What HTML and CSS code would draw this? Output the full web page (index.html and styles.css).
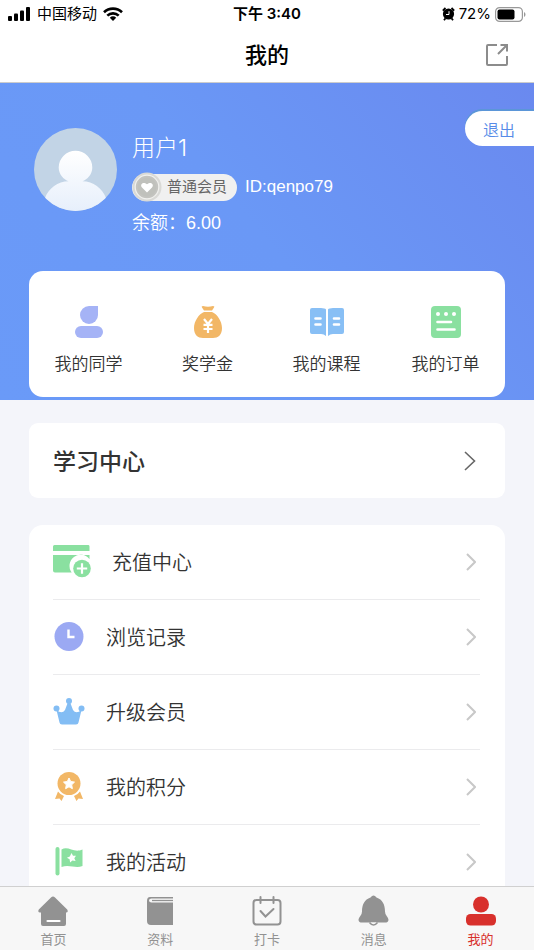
FILE: index.html
```html
<!DOCTYPE html>
<html lang="zh-CN">
<head>
<meta charset="utf-8">
<meta name="viewport" content="width=device-width, initial-scale=1">
<title>我的</title>
<link rel="stylesheet" href="styles.css">
</head>
<body>
<div class="status">
  <div class="status-side">
    <svg width="23" height="14" viewBox="0 0 23 14"><rect x="0" y="9" width="4" height="5" rx="1"/><rect x="6" y="6.500" width="4" height="7.500" rx="1"/><rect x="12" y="3.500" width="4" height="10.500" rx="1"/><rect x="18" y="0" width="4" height="14" rx="1"/></svg>
    <span>中国移动</span>
    <svg width="20" height="14" viewBox="0 0 20 14" fill="none" stroke="#000" stroke-width="2.600"><path d="M1 5.200a13 13 0 0 1 18 0"/><path d="M4.300 8.600a8.300 8.300 0 0 1 11.400 0"/><path d="M10 14l-3.200-3.200a4.700 4.700 0 0 1 6.400 0z" fill="#000" stroke="none"/></svg>
  </div>
  <strong class="clock">下午 3:40</strong>
  <div class="status-side status-end">
    <svg width="13" height="14" viewBox="0 0 13 14"><circle cx="6.500" cy="7" r="5.600"/><path d="M.8 3.600L3.500 1M12.200 3.600L9.500 1M2 13.200l1.500-2M11 13.200l-1.500-2" stroke="#000" stroke-width="1.800"/><path d="M7 4.200v3.300H4" fill="none" stroke="#fff"/></svg>
    <span class="percent">72%</span>
    <svg width="31" height="15" viewBox="0 0 31 15"><rect x=".6" y=".6" width="26.800" height="13.800" rx="4" fill="none" stroke="#999" stroke-width="1.200"/><rect x="2.500" y="2.500" width="17" height="10" rx="2"/><path d="M29 5c2 1 2 4 0 5z" fill="#999"/></svg>
  </div>
</div>
<header class="nav">
  <h1>我的</h1>
  <button class="share" aria-label="分享"><svg width="24" height="24" viewBox="0 0 24 24" fill="none" stroke="#8c8c8c" stroke-width="2"><path d="M12 2H3Q2 2 2 3V21Q2 22 3 22H21Q22 22 22 21V13M13 11L22 2M15.500 2H22V8.500"/></svg></button>
</header>
<main>
  <section class="hero">
    <button class="logout">退出</button>
    <div class="profile">
      <svg class="avatar" viewBox="0 0 84 84" role="img" aria-label="头像">
        <defs><linearGradient id="person" x2="0" y2="1"><stop stop-color="#fff"/><stop offset="1" stop-color="#e5eefb"/></linearGradient><clipPath id="round"><circle cx="42" cy="42" r="42"/></clipPath></defs>
        <circle cx="42" cy="42" r="42" fill="#c2d4e6"/>
        <path clip-path="url(#round)" fill="url(#person)" d="M35 54C30 52 25 47 25 40a17 17 0 0 1 34 0c0 7-5 12-10 14 11 0 20 7 24 17v17H11V71c4-10 13-17 24-17z"/>
      </svg>
      <div class="details">
        <h2>用户1</h2>
        <div class="member">
          <span class="badge"><svg class="medal" width="30" height="30" viewBox="0 0 30 30"><circle cx="15" cy="15" r="14.500" fill="#d9d9d6"/><circle cx="15" cy="15" r="11.800" fill="#c4c4c0" stroke="#f1f1ee" stroke-width="1.200"/><circle cx="15" cy="15" r="9.500" fill="#c0c1bc"/><path fill="#fff" d="M15 20.500L10 15.500C7.500 12.500 11 8.800 15 12.300 19 8.800 22.500 12.500 20 15.500z"/></svg>普通会员</span>
          <span>ID:qenpo79</span>
        </div>
        <p>余额：6.00</p>
      </div>
    </div>
    <nav class="shortcuts">
      <a href="#"><svg width="36" height="36" viewBox="0 0 36 36" fill="#a5b3f6"><path d="M27 2v9a9 9 0 1 1-9-9z"/><rect x="4" y="22" width="28" height="12" rx="6"/></svg>我的同学</a>
      <a href="#"><svg width="36" height="36" viewBox="0 0 36 36" fill="#f2b766"><path d="M13 2q5 1.500 10 0 2 0 1 1.500L22 6.500H14L12 3.500Q11 2 13 2zM14 8h8c5 2 10 9 10 16s-4 10-9 10H13c-5 0-9-3-9-10S9 10 14 8z"/><path d="M14 15l4 5 4-5M18 20v9M13.500 20.800h9M13.500 25h9" fill="none" stroke="#fff" stroke-width="2.200"/></svg>奖学金</a>
      <a href="#"><svg width="36" height="36" viewBox="0 0 36 36" fill="#88bff5"><path d="M2 4h10q4 0 5 1.500V32q-2-2-5-2H3q-2 0-2-2V6q0-2 2-2zM34 4H24q-4 0-5 1.500V32q2-2 5-2h9q2 0 2-2V6q0-2-2-2z"/><path d="M6.500 14.500h5M6.500 20.500h5M25 14.500h5M25 20.500h5" stroke="#fff" stroke-width="2.600" stroke-linecap="round"/></svg>我的课程</a>
      <a href="#"><svg width="36" height="36" viewBox="0 0 36 36"><rect x="3" y="2" width="30" height="32" rx="4" fill="#8ae0a0"/><g fill="#fff"><circle cx="10" cy="10" r="2"/><circle cx="18" cy="10" r="2"/><circle cx="26" cy="10" r="2"/></g><path d="M9.500 18H23M9.500 25.500h17" stroke="#fff" stroke-width="2.600" stroke-linecap="round"/></svg>我的订单</a>
    </nav>
  </section>
  <a class="card study" href="#"><h2>学习中心</h2><svg width="12" height="20" viewBox="0 0 12 20" fill="none" stroke="#666" stroke-width="1.600"><path d="M1 1l9.500 9L1 19"/></svg></a>
  <ul class="card menu">
    <li><a href="#"><svg width="38" height="34" viewBox="0 0 38 34" fill="#8ae0a0"><path d="M1.500 0h34Q36.500 0 36.500 1.500V6H0V1.500Q0 0 1.500 0zM0 10H36.500V14.200A11 11 0 0 0 18.700 27.500H2Q0 27.500 0 25.500z"/><circle cx="29" cy="23.500" r="8.800"/><path d="M23.800 23.500h10.400M29 18.300v10.400" stroke="#fff" stroke-width="2.200"/></svg><span>充值中心</span><svg class="arrow" viewBox="0 0 10 18"><path d="M1 1l8 8-8 8"/></svg></a></li>
    <li><a href="#"><svg width="32" height="32" viewBox="0 0 32 32"><circle cx="16" cy="15.500" r="14.500" fill="#9ba9f3"/><path d="M15.500 8.500v7.500h6" fill="none" stroke="#fff" stroke-width="2.400"/></svg><span>浏览记录</span><svg class="arrow" viewBox="0 0 10 18"><path d="M1 1l8 8-8 8"/></svg></a></li>
    <li><a href="#"><svg width="32" height="32" viewBox="0 0 32 32" fill="#83bdf4"><circle cx="3.500" cy="12.500" r="3"/><circle cx="16" cy="5" r="3"/><circle cx="28.500" cy="12.500" r="3"/><path d="M3.500 14q5.500 4.500 8.500 0l3-8h2l3 8q3 4.500 8.500 0L25.500 26.500Q25.200 28.500 23 28.500H9Q6.800 28.500 6.500 26.500z"/></svg><span>升级会员</span><svg class="arrow" viewBox="0 0 10 18"><path d="M1 1l8 8-8 8"/></svg></a></li>
    <li><a href="#"><svg width="32" height="32" viewBox="0 0 32 32" fill="#f2b766"><circle cx="16" cy="12.500" r="11.500"/><path fill="#fff" stroke="#fff" stroke-linejoin="round" d="M16 7l1.700 3.500 3.800.6-2.800 2.700.7 3.900-3.400-1.900-3.400 1.900.7-3.900-2.800-2.700 3.800-.6z"/><path d="M5 20.500q2 3 6 4.500L8.500 30 6.500 27.500l-4.500.5zM27 20.500q-2 3-6 4.500l2.500 5 2-2.500 4.500.5z"/></svg><span>我的积分</span><svg class="arrow" viewBox="0 0 10 18"><path d="M1 1l8 8-8 8"/></svg></a></li>
    <li><a href="#"><svg width="32" height="32" viewBox="0 0 32 32" fill="#8ae0a0"><rect x="2.500" y="1" width="4" height="28.500" rx="2"/><path d="M8.500 3.500c7-4 12 4 21 0V20c-7 3-13-2-21 1z"/><path fill="#fff" d="M18.500 7l1.500 2.800 3-.1-1.700 2.500 1.300 2.700-3.200-.5-2.300 2-.5-3.100-2.700-1.500 2.900-1.400z"/></svg><span>我的活动</span><svg class="arrow" viewBox="0 0 10 18"><path d="M1 1l8 8-8 8"/></svg></a></li>
  </ul>
</main>
<nav class="tabs">
  <a href="#"><svg width="32" height="32" viewBox="0 0 32 32" fill="#929292"><path d="M14 2.500q2-2 4 0L30.200 14.500q1.500 2.500-1 3H29V29q0 2-2 2H6q-2 0-2-2V17.500H3Q.300 17 1.800 14.500z"/><path d="M10.500 26h12" stroke="#fff" stroke-width="2.200" stroke-linecap="round"/></svg>首页</a>
  <a href="#"><svg width="32" height="32" viewBox="0 0 32 32" fill="#929292"><path d="M6 2H29V3.500H7.500Q5 3.500 5 5.500T7.500 7.500H29V30H7Q3 30 3 26V6Q3 2 6 2z"/><path d="M8 5.500h21" stroke="#929292" stroke-width="1.300"/></svg>资料</a>
  <a href="#"><svg width="32" height="32" viewBox="0 0 32 32" fill="none" stroke="#929292" stroke-width="2" stroke-linecap="round"><rect x="2.500" y="5" width="27" height="24.500" rx="3"/><path d="M9.500 2v6M22.500 2v6M9.500 16l5 5.500L22.500 14"/></svg>打卡</a>
  <a href="#"><svg width="32" height="32" viewBox="0 0 32 32" fill="#929292"><path d="M12.500 2.500q3-4 6 0c6 2 8.500 7 8.500 14q0 3 2 5c3 4 1 6-2 6H4c-3 0-5-2-2-6q2-2 2-5C4 9.500 6.500 4.500 12.500 2.500z"/><path d="M11.500 27.500q4 5 8 0" fill="#f7f7f7" stroke="#929292" stroke-width="1.600"/></svg>消息</a>
  <a class="active" href="#" aria-current="page"><svg width="32" height="32" viewBox="0 0 32 32" fill="#d8302c"><circle cx="16" cy="9.500" r="8"/><rect x="1" y="19" width="30" height="11.500" rx="4.500"/></svg>我的</a>
</nav>
</body>
</html>
```
FILE: styles.css
```css
* { box-sizing: border-box; }

body {
  display: flex;
  flex-direction: column;
  height: 100vh;
  margin: 0;
  background: #f4f5fa;
  color: #333;
  font-family: "Liberation Sans", "Noto Sans CJK SC", sans-serif;
}

h1, h2, p, ul { margin: 0; padding: 0; }
svg { display: block; flex: none; }
a { color: inherit; text-decoration: none; }
button { border: 0; font: inherit; cursor: pointer; }

.status {
  display: flex;
  align-items: center;
  height: 28px;
  padding: 0 8px;
  background: #fff;
  color: #000;
  font-family: Inter, "Noto Sans CJK SC", sans-serif;
  font-size: 15px;
  line-height: 24px;
}
.status-side { display: flex; flex: 1; align-items: center; gap: 6px; }
.status-end { justify-content: flex-end; gap: 4px; }
.percent { font-size: 15px; }
.clock { font-weight: 600; }

.nav {
  display: grid;
  grid-template-columns: 1fr auto 1fr;
  align-items: center;
  height: 55px;
  padding: 0 25px;
  border-bottom: 1px solid #ccc;
  background: #fff;
  color: #000;
}
.nav h1 { grid-column: 2; padding-top: 2px; font-size: 22px; font-weight: 500; line-height: 32px; }
.share { justify-self: end; padding: 0; background: none; }

main { flex: 1; min-height: 0; overflow: hidden auto; scrollbar-width: none; }

.hero {
  position: relative;
  padding: 45px 29px 3px;
  background: linear-gradient(50deg, #6a9af8 0%, #6a98f6 50%, #6a89ef 100%);
}
.logout {
  position: absolute;
  top: 28px;
  right: 0;
  height: 35px;
  padding: 0 19px 0 18px;
  border-radius: 18px 0 0 18px;
  background: #fff;
  box-shadow: 0 -2px 0 #5b96d8;
  color: #568be8;
  font-size: 16px;
  font-weight: 350;
}

.profile { display: flex; gap: 15px; padding-left: 5px; color: #fff; }
.avatar { width: 83px; height: 83px; }
.details { display: flex; flex-direction: column; height: 143px; padding-top: 2px; gap: 6px; }
.details h2 {
  font-family: Inter, "Noto Sans CJK SC", sans-serif;
  font-size: 23px;
  font-weight: 300;
  line-height: 36px;
}
.details p { font-size: 18px; font-weight: 350; line-height: 30px; }
.member { display: flex; align-items: center; gap: 8px; font-size: 17px; line-height: 30px; }
.badge {
  display: flex;
  align-items: center;
  gap: 5px;
  height: 27px;
  padding-right: 10px;
  border-radius: 14px;
  background: #f0f0f0;
  color: #666;
  font-size: 15px;
}

.shortcuts {
  display: grid;
  grid-template-columns: repeat(4, 1fr);
  height: 126px;
  padding-top: 33px;
  border-radius: 14px;
  background: #fff;
}
.shortcuts a {
  display: flex;
  flex-direction: column;
  align-items: center;
  gap: 12px;
  font-size: 17px;
  font-weight: 350;
  line-height: 26px;
}

.card { margin: 0 29px; background: #fff; }
.study {
  display: flex;
  align-items: center;
  justify-content: space-between;
  height: 75px;
  margin-top: 23px;
  padding: 0 29px 0 24px;
  border-radius: 9px;
}
.study h2 { padding-top: 2px; font-size: 23px; font-weight: 500; line-height: 34px; }

.menu { margin-top: 27px; padding: 0 25px 0 24px; border-radius: 14px; list-style: none; }
.menu li + li { border-top: 1px solid #ebebed; }
.menu a {
  display: flex;
  align-items: center;
  gap: 21px;
  height: 74px;
  font-size: 20px;
  font-weight: 350;
  line-height: 30px;
}
.menu span { padding-top: 2px; }
.arrow {
  width: 10px;
  height: 18px;
  margin: 0 4px 0 auto;
  fill: none;
  stroke: #c8c8c8;
  stroke-width: 2;
}

.tabs {
  display: grid;
  flex: none;
  grid-template-columns: repeat(5, 1fr);
  height: 64px;
  padding-top: 8px;
  border-top: 1px solid #d0d0d0;
  background: #f7f7f7;
  color: #929292;
}
.tabs a {
  display: flex;
  flex-direction: column;
  align-items: center;
  gap: 4px;
  font-size: 13px;
  line-height: 18px;
}
.tabs .active { color: #d8302c; }
```
